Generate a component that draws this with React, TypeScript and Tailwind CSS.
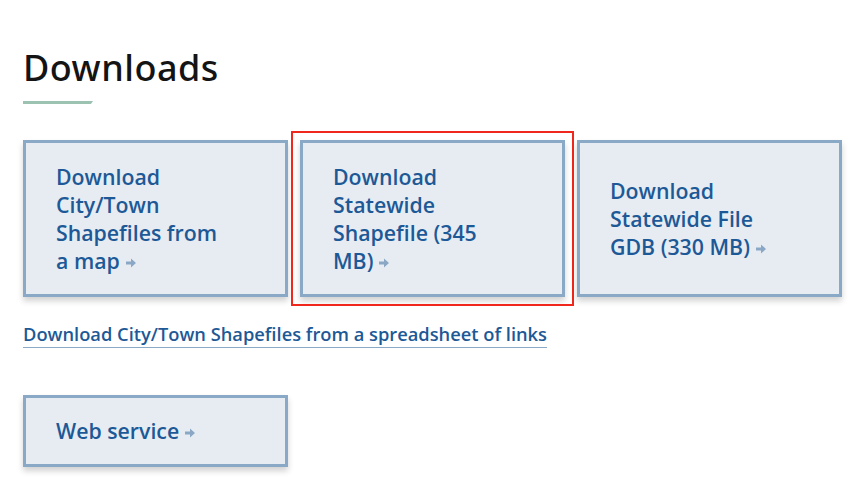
import React from "react";

const Arrow = () => (
  <svg width="10" height="10" viewBox="0 0 10 10" className="ml-[6px] inline-block align-[1px]" aria-hidden>
    <path d="M0 3.6h5V0.4L10 5 5 9.6V6.4H0z" fill="#8aa8c6" />
  </svg>
);

function Card({ children, outlined = false, h = "h-[157px]" }: { children: React.ReactNode; outlined?: boolean; h?: string }) {
  return (
    <a
      href="#"
      className={`flex ${h} w-[265px] items-center border-[3px] border-[#8aa9c6] bg-[#e7ecf3] pl-[30px] pr-[20px] shadow-[0_4px_6px_rgba(0,0,0,0.18)] ${
        outlined ? "outline-2 outline-offset-[7px] outline-[#f0271d]" : ""
      }`}
    >
      <span
        className="w-[184px] text-[21.3px] font-semibold leading-[28px] text-[#1d5996]"
        style={{ fontFamily: '"Open Sans", "Noto Sans", sans-serif' }}
      >
        {children}
      </span>
    </a>
  );
}

export default function App() {
  return (
    <div
      className="min-h-[488px] bg-white px-[23px] pt-[44px]"
      style={{ fontFamily: '"Noto Sans", "Open Sans", sans-serif' }}
    >
      <h2 className="text-[36px] font-medium leading-[48px] tracking-[0.5px] text-[#141414]">Downloads</h2>
      <div className="mt-[9px] h-[3px] w-[70px] bg-[#9cc3b1] [clip-path:polygon(0_0,100%_0,97%_100%,0_100%)]" />
      <div className="mt-[36px] flex gap-[12px]">
        <Card>
          Download City/Town Shapefiles from{" "}
          <span className="whitespace-nowrap">
            a map
            <Arrow />
          </span>
        </Card>
        <Card outlined>
          Download Statewide Shapefile (345{" "}
          <span className="whitespace-nowrap">
            MB)
            <Arrow />
          </span>
        </Card>
        <Card>
          Download Statewide File GDB (330{" "}
          <span className="whitespace-nowrap">
            MB)
            <Arrow />
          </span>
        </Card>
      </div>
      <div className="mt-[25px]">
        <a
          href="#"
          className="border-b border-[#8aa9c6] pb-[1px] text-[18.3px] font-semibold leading-[24px] text-[#1d5996]"
          style={{ fontFamily: '"Open Sans", "Noto Sans", sans-serif' }}
        >
          Download City/Town Shapefiles from a spreadsheet of links
        </a>
      </div>
      <div className="mt-[48px] flex">
        <Card h="h-[72px]">
          Web{" "}
          <span className="whitespace-nowrap">
            service
            <Arrow />
          </span>
        </Card>
      </div>
    </div>
  );
}
